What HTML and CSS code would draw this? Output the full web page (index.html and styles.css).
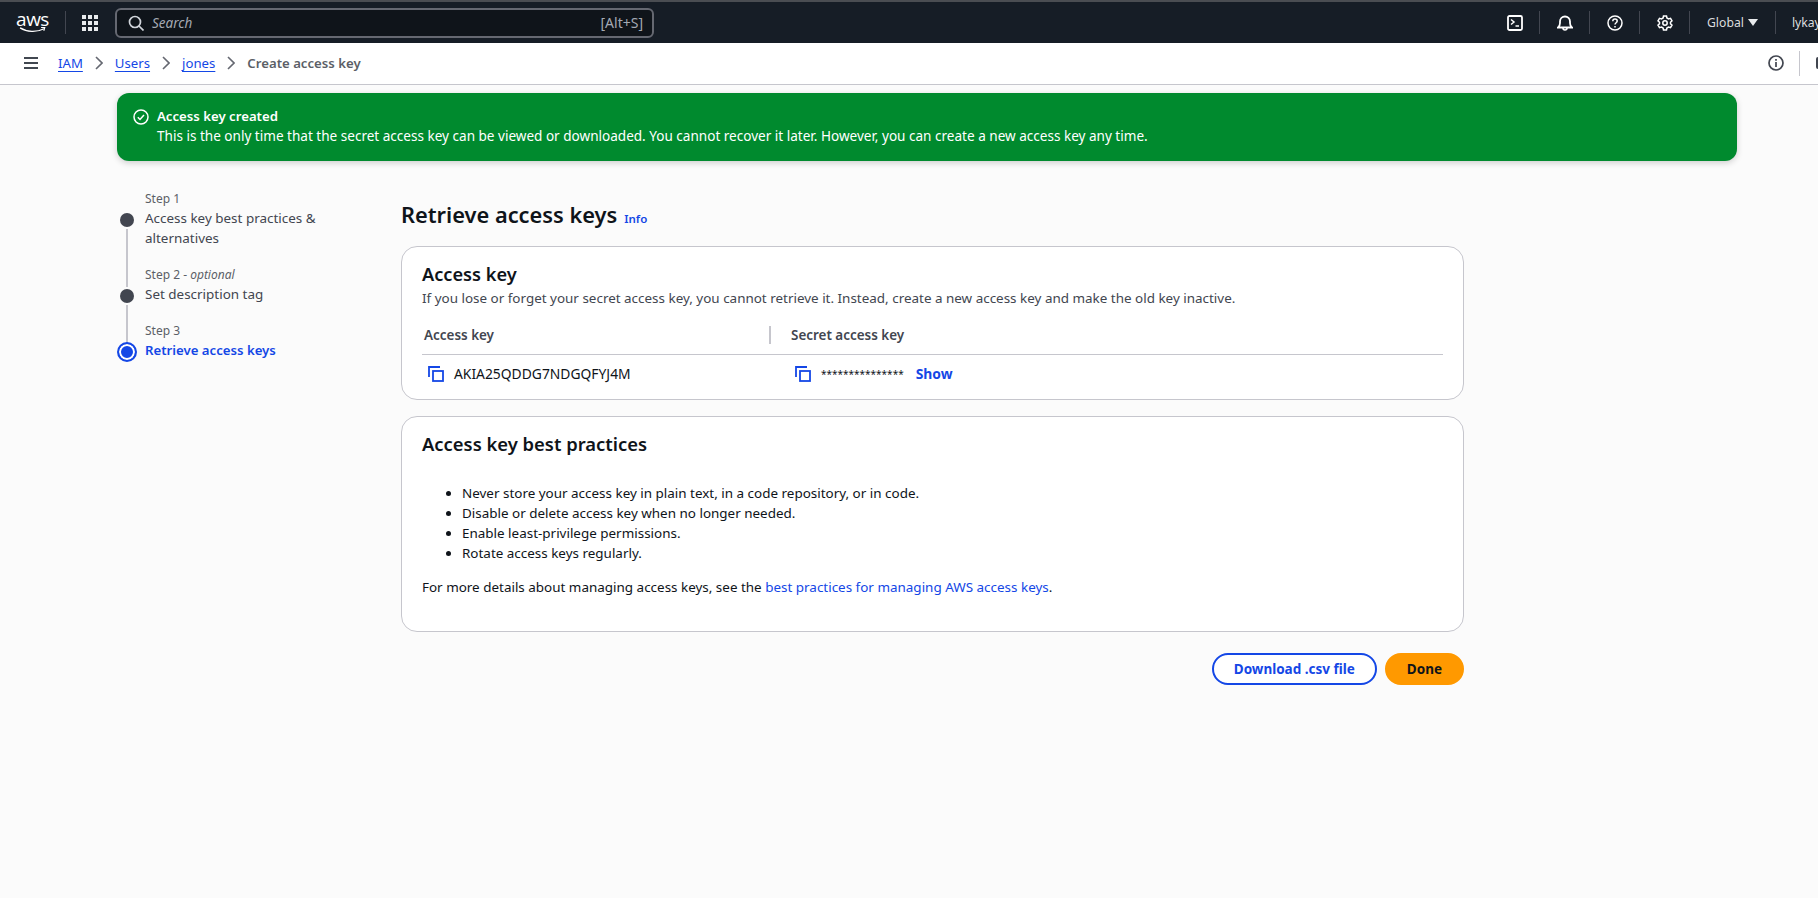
FILE: index.html
```html
<!DOCTYPE html>
<html lang="en">
  <head>
    <meta charset="UTF-8" />
    <title>Create access key</title>
    <link rel="stylesheet" href="styles.css">
  </head>
  <body>
    <header class="topnav">
      <div class="logo">
        <span class="logo-text">aws</span>
        <svg class="logo-smile" width="31" height="7" viewBox="0 0 31 7"><path d="M1 1c8 5 19 5.500 28 1" fill="none" stroke="#fff" stroke-width="1.5"/><path d="M25.500 .7l4.500-.4-1.300 4.200" fill="none" stroke="#fff" stroke-width="1.2"/></svg>
      </div>
      <span class="nav-sep"></span>
      <svg class="grid-icon" width="16" height="16" viewBox="0 0 16 16" fill="#e9ebed">
        <rect x="0" y="0" width="4" height="4"/><rect x="6" y="0" width="4" height="4"/><rect x="12" y="0" width="4" height="4"/>
        <rect x="0" y="6" width="4" height="4"/><rect x="6" y="6" width="4" height="4"/><rect x="12" y="6" width="4" height="4"/>
        <rect x="0" y="12" width="4" height="4"/><rect x="6" y="12" width="4" height="4"/><rect x="12" y="12" width="4" height="4"/>
      </svg>
      <div class="search">
        <svg width="16" height="16" viewBox="0 0 16 16" fill="none" stroke="#d1d5db" stroke-width="1.7"><circle cx="7" cy="7" r="5.5"/><path d="M11 11l4.500 4.500"/></svg>
        <span class="search-text">Search</span>
        <span class="search-key">[Alt+S]</span>
      </div>
      <div class="utils">
        <div class="util">
          <svg width="16" height="16" viewBox="0 0 16 16" fill="none" stroke="#fff" stroke-width="1.8"><rect x="1" y="1" width="14" height="14" rx="1.5"/><path d="M4 4.500l3 2.500-3 2.500M8.500 11H12" stroke-width="1.5"/></svg>
        </div>
        <div class="util">
          <svg width="16" height="16" viewBox="0 0 16 16" fill="none" stroke="#fff" stroke-width="1.8"><path d="M1 12.500h14c-1.500-1-2-2.500-2-4.500V6.500a5 5 0 0 0-10 0V8c0 2-.5 3.500-2 4.500z"/><path d="M6 13c0 1.500 1 2 2 2s2-.5 2-2" stroke-width="1.6"/></svg>
        </div>
        <div class="util">
          <svg width="16" height="16" viewBox="0 0 16 16" fill="none" stroke="#fff" stroke-width="1.5"><circle cx="8" cy="8" r="7"/><path d="M5.800 6.200C5.800 4.800 6.800 4 8 4s2.200.8 2.200 2c0 1.800-2.200 1.700-2.200 3.600"/><path d="M8 11v1.500"/></svg>
        </div>
        <div class="util">
          <svg width="16" height="16" viewBox="0 0 16 16" fill="none" stroke="#fff" stroke-width="1.5"><circle cx="8" cy="8" r="2.2"/><path d="M6.500 1h3l.4 2 1.600.9 2-.6 1.500 2.600-1.500 1.400v1.400l1.500 1.400-1.500 2.600-2-.6-1.600.9-.4 2h-3l-.4-2-1.600-.9-2 .6L1 10.100l1.500-1.400V7.300L1 5.900l1.500-2.600 2 .6 1.600-.9z"/></svg>
        </div>
        <div class="util util-text">Global <span class="caret"></span></div>
        <div class="util util-text util-user">lykay</div>
      </div>
    </header>

    <nav class="crumbbar">
      <svg class="menu-icon" width="16" height="12" viewBox="0 0 16 12" fill="#414750"><rect width="14" height="2" x="1" y="0"/><rect width="14" height="2" x="1" y="5"/><rect width="14" height="2" x="1" y="10"/></svg>
      <a class="crumb" href="#">IAM</a>
      <svg class="chev" width="8" height="14" viewBox="0 0 8 14"><path d="M1 1l6 6-6 6" fill="none" stroke="#656871" stroke-width="1.6"/></svg>
      <a class="crumb" href="#">Users</a>
      <svg class="chev" width="8" height="14" viewBox="0 0 8 14"><path d="M1 1l6 6-6 6" fill="none" stroke="#656871" stroke-width="1.6"/></svg>
      <a class="crumb" href="#">jones</a>
      <svg class="chev" width="8" height="14" viewBox="0 0 8 14"><path d="M1 1l6 6-6 6" fill="none" stroke="#656871" stroke-width="1.6"/></svg>
      <span class="crumb-current">Create access key</span>
      <div class="crumb-right">
        <svg width="16" height="16" viewBox="0 0 16 16" fill="none" stroke="#424650" stroke-width="1.7"><circle cx="8" cy="8" r="7"/><path d="M8 7v5M8 4v1.800"/></svg>
        <span class="crumb-sep"></span>
        <span class="crumb-cut"></span>
      </div>
    </nav>

    <main class="page">
      <div class="flash">
        <svg class="flash-icon" width="16" height="16" viewBox="0 0 16 16" fill="none" stroke="#fff" stroke-width="1.5"><circle cx="8" cy="8" r="7"/><path d="M4.800 8.300l2.200 2.200 4-4.500"/></svg>
        <div>
          <div class="flash-title">Access key created</div>
          <div>This is the only time that the secret access key can be viewed or downloaded. You cannot recover it later. However, you can create a new access key any time.</div>
        </div>
      </div>

      <div class="wizard">
        <ol class="steps">
          <li class="step">
            <div class="step-label">Step 1</div>
            <div class="step-name">Access key best practices &amp; alternatives</div>
          </li>
          <li class="step">
            <div class="step-label">Step 2 - <em>optional</em></div>
            <div class="step-name">Set description tag</div>
          </li>
          <li class="step step-active">
            <div class="step-label">Step 3</div>
            <div class="step-name">Retrieve access keys</div>
          </li>
        </ol>

        <div class="content">
          <div class="title-row">
            <h1>Retrieve access keys</h1>
            <a class="info" href="#">Info</a>
          </div>

          <section class="card">
            <h2>Access key</h2>
            <p class="card-desc">If you lose or forget your secret access key, you cannot retrieve it. Instead, create a new access key and make the old key inactive.</p>
            <div class="keys">
              <div class="key-head">Access key</div>
              <div class="key-head key-head-2">Secret access key</div>
              <div class="key-cell">
                <svg class="copy" width="16" height="16" viewBox="0 0 16 16" fill="none" stroke="#1447e6" stroke-width="1.8"><path d="M1 11V1h11"/><rect x="5" y="5" width="10" height="10"/></svg>
                <span>AKIA25QDDG7NDGQFYJ4M</span>
              </div>
              <div class="key-cell key-cell-2">
                <svg class="copy" width="16" height="16" viewBox="0 0 16 16" fill="none" stroke="#1447e6" stroke-width="1.8"><path d="M1 11V1h11"/><rect x="5" y="5" width="10" height="10"/></svg>
                <span class="stars">***************</span>
                <a class="show" href="#">Show</a>
              </div>
            </div>
          </section>

          <section class="card card-practices">
            <h2>Access key best practices</h2>
            <ul>
              <li>Never store your access key in plain text, in a code repository, or in code.</li>
              <li>Disable or delete access key when no longer needed.</li>
              <li>Enable least-privilege permissions.</li>
              <li>Rotate access keys regularly.</li>
            </ul>
            <p>For more details about managing access keys, see the <a href="#">best practices for managing AWS access keys</a>.</p>
          </section>

          <div class="actions">
            <button class="btn">Download .csv file</button>
            <button class="btn btn-primary">Done</button>
          </div>
        </div>
      </div>
    </main>
  </body>
</html>
```

FILE: styles.css
```css
*,
*::before,
*::after {
  box-sizing: border-box;
}

html,
body {
  height: 100%;
}

body {
  margin: 0;
  font-family: 'Noto Sans', sans-serif;
  font-size: 13.45px;
  line-height: 20px;
  color: #0f141a;
  background: #fbfbfb;
  overflow: hidden;
}

a {
  color: #1447e6;
  text-decoration: none;
}

.topnav {
  display: flex;
  align-items: center;
  height: 43px;
  padding-left: 17px;
  background: #161d26;
  border-top: 2px solid #4a4d52;
  color: #fff;
}

.logo {
  display: flex;
  flex-direction: column;
  align-items: center;
  width: 31px;
  height: 21px;
}

.logo-text {
  font-family: 'Open Sans', sans-serif;
  font-size: 19px;
  line-height: 14px;
  letter-spacing: -0.5px;
}

.logo-smile {
  margin-top: 1px;
}

.nav-sep {
  width: 1px;
  height: 23px;
  margin: 0 16px 0 17px;
  background: #424650;
}

.grid-icon {
  margin-right: 17px;
}

.search {
  display: flex;
  align-items: center;
  width: 539px;
  height: 30px;
  padding: 0 9px 0 11px;
  background: #0f141a;
  border: 2px solid #656871;
  border-radius: 6px;
  color: #a4a9b3;
  font-size: 14px;
}

.search-text {
  margin-left: 8px;
  font-size: 13.5px;
  font-style: italic;
}

.search-key {
  margin-left: auto;
}

.utils {
  display: flex;
  flex: none;
  align-items: center;
  width: 328px;
  margin-left: auto;
  overflow: hidden;
}

.util {
  display: flex;
  flex: none;
  align-items: center;
  justify-content: center;
  width: 50px;
  height: 23px;
  border-right: 1px solid #424650;
}

.util-text {
  width: auto;
  padding: 0 17px;
  font-size: 12.2px;
  color: #dbdcde;
  gap: 4px;
}

.util-user {
  padding-left: 16px;
  border-right: none;
}

.caret {
  width: 0;
  height: 0;
  border-left: 5px solid transparent;
  border-right: 5px solid transparent;
  border-top: 7px solid #e9ebed;
}

.crumbbar {
  display: flex;
  align-items: center;
  height: 42px;
  padding: 0 0 1px 23px;
  background: #fff;
  border-bottom: 1px solid #c6c6cd;
  font-size: 13.2px;
}

.menu-icon {
  margin-right: 19px;
}

.crumb {
  text-decoration: underline;
  text-underline-offset: 3px;
}

.chev {
  margin: 0 12px;
}

.crumb-current {
  font-weight: 600;
  color: #5b5f67;
}

.crumb-right {
  display: flex;
  align-items: center;
  margin-left: auto;
}

.crumb-sep {
  width: 1px;
  height: 25px;
  margin: 0 16px 0 15px;
  background: #c6c6cd;
}

.crumb-cut {
  width: 4px;
  height: 12px;
  margin-right: -2px;
  background: #424650;
  border-radius: 2px;
}

.page {
  padding: 8px 81px 0 117px;
}

.flash {
  display: flex;
  gap: 8px;
  height: 68px;
  padding: 13px 16px;
  background: #008a2e;
  border-radius: 12px;
  box-shadow: 0 2px 6px rgba(0, 0, 0, 0.18);
  color: #fff;
  font-size: 13.55px;
}

.flash-icon {
  flex: none;
  margin-top: 3px;
}

.flash-title {
  font-size: 13.2px;
  font-weight: 600;
}

.wizard {
  display: flex;
  padding-top: 28px;
}

.steps {
  width: 284px;
  flex: none;
  margin: 0;
  padding: 0;
  list-style: none;
}

.step {
  position: relative;
  width: 200px;
  padding: 0 0 17px 28px;
  color: #424650;
}

.step:last-child {
  padding-bottom: 0;
}

.step::before {
  content: '';
  position: absolute;
  left: 3px;
  top: 24px;
  width: 14px;
  height: 14px;
  background: #424650;
  border-radius: 50%;
}

.step::after {
  content: '';
  position: absolute;
  left: 9px;
  top: 40px;
  bottom: -22px;
  width: 2px;
  background: #c6c6cd;
}

.step:last-child::after {
  display: none;
}

.step-label {
  font-size: 12px;
  color: #5b5f67;
}

.step-name {
  margin-top: -1px;
}

.step-active .step-name {
  font-size: 13.2px;
  color: #1447e6;
  font-weight: 600;
}

.step-active::before {
  left: 0;
  top: 21px;
  width: 20px;
  height: 20px;
  background: #1447e6;
  border: 2px solid #1447e6;
  box-shadow: inset 0 0 0 2px #fff;
}

.content {
  width: 1063px;
}

.title-row {
  display: flex;
  align-items: baseline;
  gap: 7px;
  height: 57px;
  padding-top: 11px;
}

h1 {
  margin: 0;
  font-size: 21.8px;
  line-height: 30px;
  font-weight: 600;
}

.info {
  font-size: 11.5px;
  font-weight: 600;
}

.card {
  height: 154px;
  padding: 15px 20px 0;
  margin-bottom: 16px;
  background: #fff;
  border: 1px solid #c6c6cd;
  border-radius: 16px;
}

h2 {
  margin: 0;
  font-size: 18.2px;
  line-height: 24px;
  font-weight: 600;
}

.card-desc {
  margin: 2px 0 0;
  color: #424650;
}

.keys {
  display: grid;
  grid-template-columns: 366px 1fr;
  grid-template-rows: 39px 38px;
  margin-top: 8px;
}

.key-head {
  display: flex;
  align-items: center;
  padding-left: 2px;
  font-weight: 600;
  color: #424650;
  border-bottom: 1px solid #c6c6cd;
}

.key-head-2 {
  position: relative;
  padding-left: 3px;
}

.key-head-2::before {
  content: '';
  position: absolute;
  left: -19px;
  top: 10px;
  height: 18px;
  width: 2px;
  background: #c6c6cd;
}

.key-cell {
  display: flex;
  align-items: center;
  padding-left: 6px;
  gap: 10px;
  font-size: 13.85px;
}

.key-cell-2 {
  padding-left: 7px;
}

.copy {
  flex: none;
}

.stars {
  font-size: 10px;
}

.show {
  margin-left: 2px;
  font-weight: 700;
}

.card-practices {
  height: 216px;
}

.card-practices h2 {
  font-size: 18.4px;
}

.card-practices ul {
  margin: 27px 0 0;
  padding-left: 40px;
}

.card-practices p {
  margin: 14px 0 0;
}

.actions {
  display: flex;
  justify-content: flex-end;
  gap: 8px;
  margin-top: 21px;
}

.btn {
  height: 32px;
  padding: 0 20px;
  font-family: 'Noto Sans', sans-serif;
  font-size: 13.5px;
  font-weight: 700;
  color: #1447e6;
  background: #fff;
  border: 2px solid #1447e6;
  border-radius: 20px;
}

.btn-primary {
  padding: 0 20px;
  color: #0f141a;
  background: #ff9900;
  border-color: #ff9900;
}
```
